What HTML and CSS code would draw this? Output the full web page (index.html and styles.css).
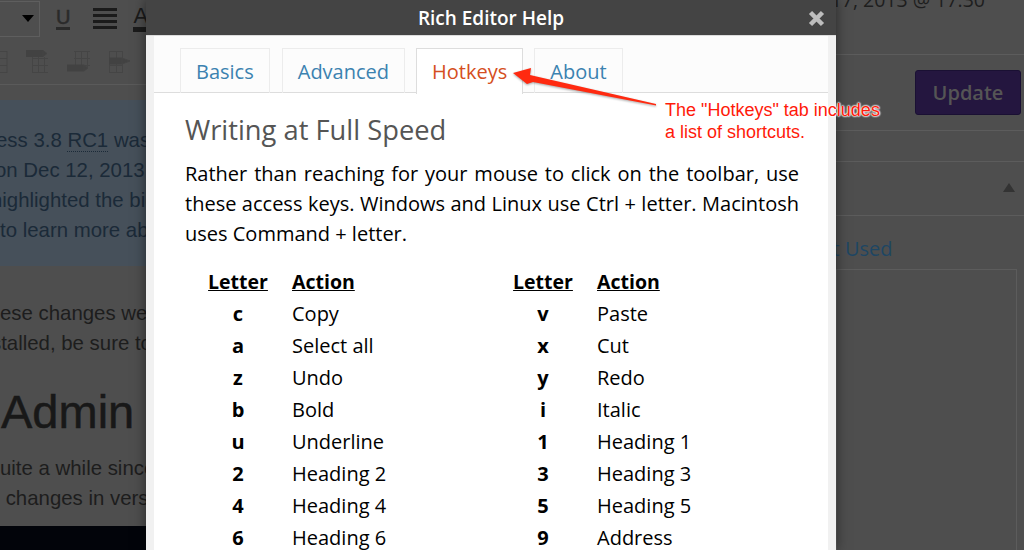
FILE: index.html
```html
<!DOCTYPE html>
<html lang="en">
<head>
    <meta charset="UTF-8">
    <title>Rich Editor Help</title>
    <link rel="stylesheet" href="styles.css">
</head>
<body>
    <div class="page">
        <div class="editor">
            <div class="toolbar">
                <div class="toolbar-row">
                    <div class="select-box"><span class="caret"></span></div>
                    <span class="tool-u">U</span>
                    <svg class="tool-lines" width="24" height="22" viewBox="0 0 24 22"><path d="M0 1.500h24M0 7.500h24M0 13.500h24M0 19.500h24" stroke="#1b1b1b" stroke-width="3"/></svg>
                    <span class="tool-a">A</span>
                </div>
                <div class="toolbar-row table-tools">
                    <svg width="140" height="26" viewBox="0 0 140 26" fill="none" stroke="#454545">
                        <path d="M0 4.500h7M0 11.500h7M0 18.500h7M0 25.500h7M7 4v22"/>
                        <path d="M32 11.500h16M32 18.500h16M32 25.500h16M32.500 10v16M38.500 10v16M44.500 10v16"/>
                        <path d="M26 6.500h17" stroke="#424242" stroke-width="7"/><path d="M43 3.500l4 3-4 3z" fill="#424242"/>
                        <path d="M74 4.500h16M74 11.500h16M74 18.500h16M75.500 4v16M81.500 4v16M87.500 4v16"/>
                        <path d="M67 21h17" stroke="#424242" stroke-width="7"/><path d="M84 18l4 3-4 3z" fill="#424242"/>
                        <path d="M109 4.500h14M109 11.500h14M109 18.500h14M109 25.500h14M109.500 4v22M116.500 4v22M122.500 4v22"/>
                        <path d="M109 14h13" stroke="#424242" stroke-width="7"/><path d="M122 11l8 3-8 3z" fill="#424242"/>
                    </svg>
                </div>
            </div>
            <div class="notice">
                <p class="line-first">ess 3.8 <span class="abbr">RC1</span> was released</p>
                <p class="line-second">on Dec 12, 2013 and</p>
                <p class="line-third">highlighted the biggest</p>
                <p>to learn more about</p>
            </div>
            <div class="article">
                <p>ese changes were</p>
                <p class="line-third">stalled, be sure to</p>
                <h1>Admin Theme</h1>
                <p>uite a while since</p>
                <p>&nbsp;changes in version</p>
            </div>
            <div class="dark-strip"></div>
        </div>
        <div class="sidebar">
            <div class="date-row">Dec 17, 2013 @ 17:30</div>
            <div class="update-row"><div class="update-btn">Update</div></div>
            <div class="side-gap"></div>
            <div class="side-head"><span class="triangle"></span></div>
            <div class="side-tab">Most Used</div>
            <div class="side-box"></div>
        </div>
    </div>

    <div class="modal">
        <div class="modal-title">
            <span>Rich Editor Help</span>
            <svg class="close-icon" width="17" height="17" viewBox="0 0 17 17"><path d="M2.500 2.500l12 12M14.500 2.500l-12 12" stroke="#bdbdbd" stroke-width="4.500"/></svg>
        </div>
        <div class="modal-inner">
            <div class="tabs">
                <div class="tab">Basics</div>
                <div class="tab">Advanced</div>
                <div class="tab active">Hotkeys</div>
                <div class="tab">About</div>
            </div>
            <div class="tab-content">
                <h2>Writing at Full Speed</h2>
                <p>Rather than reaching for your mouse to click on the toolbar, use these access keys. Windows and Linux use Ctrl + letter. Macintosh uses Command + letter.</p>
                <div class="keys">
                    <table>
                        <tr><th>Letter</th><th>Action</th></tr>
                        <tr><td class="key">c</td><td>Copy</td></tr>
                        <tr><td class="key">a</td><td>Select all</td></tr>
                        <tr><td class="key">z</td><td>Undo</td></tr>
                        <tr><td class="key">b</td><td>Bold</td></tr>
                        <tr><td class="key">u</td><td>Underline</td></tr>
                        <tr><td class="key">2</td><td>Heading 2</td></tr>
                        <tr><td class="key">4</td><td>Heading 4</td></tr>
                        <tr><td class="key">6</td><td>Heading 6</td></tr>
                    </table>
                    <table>
                        <tr><th>Letter</th><th>Action</th></tr>
                        <tr><td class="key">v</td><td>Paste</td></tr>
                        <tr><td class="key">x</td><td>Cut</td></tr>
                        <tr><td class="key">y</td><td>Redo</td></tr>
                        <tr><td class="key">i</td><td>Italic</td></tr>
                        <tr><td class="key">1</td><td>Heading 1</td></tr>
                        <tr><td class="key">3</td><td>Heading 3</td></tr>
                        <tr><td class="key">5</td><td>Heading 5</td></tr>
                        <tr><td class="key">9</td><td>Address</td></tr>
                    </table>
                </div>
            </div>
        </div>
    </div>

    <svg class="arrow" width="160" height="50" viewBox="0 0 160 50"><path d="M2 11L20 6 19 13 145 42 145 43.500 22 20 16 22z" fill="#ff2a10"/></svg>
    <div class="callout">The "Hotkeys" tab includes<br>a list of shortcuts.</div>
</body>
</html>
```

FILE: styles.css
```css
html, body {
    height: 100%;
}

body {
    margin: 0;
    overflow: hidden;
    background-color: #4e4e4e;
    font-family: "Open Sans", sans-serif;
}

p {
    margin: 0;
}

.page {
    display: flex;
    height: 550px;
}

/* dimmed editor behind the dialog */
.editor {
    width: 836px;
    flex-shrink: 0;
    display: flex;
    flex-direction: column;
    overflow: hidden;
    white-space: nowrap;
    font-family: "Liberation Sans", sans-serif;
    font-size: 20.4px;
    line-height: 30px;
    color: #1d1d1d;
}

.toolbar {
    height: 85px;
    margin-bottom: 15px;
    box-sizing: border-box;
    border-bottom: 1px solid #5a5a5a;
    flex-shrink: 0;
}

.toolbar-row {
    display: flex;
    align-items: center;
    height: 37px;
}

.select-box {
    width: 40px;
    height: 36px;
    box-sizing: border-box;
    border: 1px solid #5e5e5e;
    border-left: 0;
    display: flex;
    align-items: center;
    justify-content: flex-end;
    padding-right: 5px;
}

.caret {
    border-top: 7px solid #000;
    border-left: 6px solid transparent;
    border-right: 6px solid transparent;
}

.tool-u {
    margin-left: 16px;
    font-size: 20px;
    color: #2a2a2a;
    border-bottom: 3px solid #2a2a2a;
    line-height: 19px;
    -webkit-text-stroke: 0.5px #2a2a2a;
}

.tool-lines {
    margin-left: 23px;
}

.tool-a {
    margin-left: 16px;
    font-size: 22px;
    line-height: 22px;
    color: #1b1b1b;
    border-bottom: 5px solid #1b1b1b;
}

.table-tools {
    height: 26px;
    margin-top: 10px;
}

.notice {
    height: 166px;
    flex-shrink: 0;
    box-sizing: border-box;
    padding-top: 25px;
    background-color: #46505a;
    color: #1b2a38;
}

.line-first {
    margin-left: -4px;
}

.line-second {
    margin-left: -5px;
}

.line-third {
    margin-left: -9px;
}

.abbr {
    border-bottom: 1px dotted #1b2a38;
}

.article {
    flex: 1;
    padding-top: 32px;
}

.article h1 {
    margin: 29px 0 16px;
    padding-left: 1px;
    font-size: 47px;
    font-weight: 400;
    line-height: 50px;
    -webkit-text-stroke: 0.5px #181818;
    color: #181818;
}

.dark-strip {
    height: 24px;
    flex-shrink: 0;
    background-color: #02040a;
}

.sidebar {
    flex: 1;
    min-width: 0;
    color: #222;
}

.date-row {
    height: 73px;
    box-sizing: border-box;
    border-bottom: 1px solid #5c5c5c;
    margin-top: -18px;
    padding: 6px 39px 0 0;
    display: flex;
    justify-content: flex-end;
    font-size: 19.5px;
    line-height: 24px;
    color: #1e1e1e;
    white-space: nowrap;
}

.update-row {
    height: 76px;
    box-sizing: border-box;
    border-bottom: 1px solid #5c5c5c;
    padding: 15px 3px 0 0;
    display: flex;
    justify-content: flex-end;
}

.update-btn {
    width: 106px;
    height: 45px;
    box-sizing: border-box;
    border-radius: 3px;
    border: 1px solid #1a1033;
    background-color: #24163f;
    color: #555;
    font-size: 20px;
    font-weight: 600;
    line-height: 44px;
    text-align: center;
}

.side-gap {
    height: 31px;
    box-sizing: border-box;
    border-bottom: 1px solid #5c5c5c;
}

.side-head {
    height: 54px;
    box-sizing: border-box;
    border-bottom: 1px solid #5c5c5c;
    padding: 21px 9px 0 0;
    display: flex;
    justify-content: flex-end;
}

.triangle {
    width: 0;
    height: 0;
    border-bottom: 9px solid #333;
    border-left: 6px solid transparent;
    border-right: 6px solid transparent;
}

.side-tab {
    margin-top: 21px;
    margin-left: -43px;
    white-space: nowrap;
    font-size: 20px;
    line-height: 24px;
    color: #1e4663;
}

.side-box {
    margin-top: 8px;
    margin-right: 7px;
    height: 300px;
    border: 1px solid #5c5c5c;
}

/* dialog */
.modal {
    position: absolute;
    top: 0;
    left: 146px;
    width: 690px;
    height: 550px;
    overflow: hidden;
    background-color: #f1f1f1;
    box-shadow: 0 0 12px rgba(0, 0, 0, 0.5);
}

.modal-title {
    position: relative;
    height: 35px;
    background-color: #444;
    border-bottom: 1px solid #dcdcdc;
    color: #fff;
    font-size: 19px;
    font-weight: 600;
    line-height: 36px;
    text-align: center;
}

.close-icon {
    position: absolute;
    top: 10px;
    right: 11px;
}

.modal-inner {
    margin: 0 8px;
    height: 514px;
    background-color: #fff;
}

.tabs {
    display: flex;
    gap: 11px;
    height: 57px;
    box-sizing: border-box;
    padding: 12px 0 0 26px;
    background-color: #fcfcfc;
    border-bottom: 1px solid #ddd;
}

.tab {
    height: 45px;
    box-sizing: border-box;
    padding: 0 15px;
    border: 1px solid #ececec;
    border-bottom: 0;
    font-size: 20px;
    line-height: 46px;
    color: #3b82b0;
}

.tab:first-child {
    margin-right: 1px;
}

.tab.active {
    height: 46px;
    background-color: #fff;
    border-color: #ddd;
    color: #d54e21;
}

.tab-content {
    padding: 19px 29px 0 31px;
    color: #000;
    font-size: 20px;
    line-height: 30px;
}

.tab-content h2 {
    margin: 0 0 11px;
    font-size: 27.3px;
    font-weight: 400;
    line-height: 36px;
    color: #555;
}

.tab-content p {
    text-align: justify;
}

.keys {
    display: flex;
    margin-top: 17px;
    padding-left: 23px;
}

.keys table {
    flex-shrink: 0;
    width: 305px;
    border-collapse: collapse;
    table-layout: fixed;
}

.keys th,
.keys td {
    padding: 0;
    height: 32px;
    line-height: 32px;
    text-align: left;
    font-size: 20px;
}

.keys th {
    font-size: 19.5px;
    font-weight: 700;
    text-decoration: underline;
}

.keys th:first-child,
.keys .key {
    width: 60px;
    padding-right: 24px;
    text-align: center;
}

.keys .key {
    font-weight: 700;
}

/* annotation drawn on top of the screenshot */
.arrow {
    position: absolute;
    top: 62px;
    left: 511px;
    filter: drop-shadow(0 1px 1px rgba(0, 0, 0, 0.35));
}

.callout {
    position: absolute;
    top: 99px;
    left: 665px;
    font-family: "Liberation Sans", sans-serif;
    font-size: 18px;
    line-height: 22px;
    color: #ff1a0a;
    white-space: nowrap;
    text-shadow: 0 0 2px #fff, 0 0 2px #fff, 0 0 2px #fff, 0 0 2px #fff;
}
```
